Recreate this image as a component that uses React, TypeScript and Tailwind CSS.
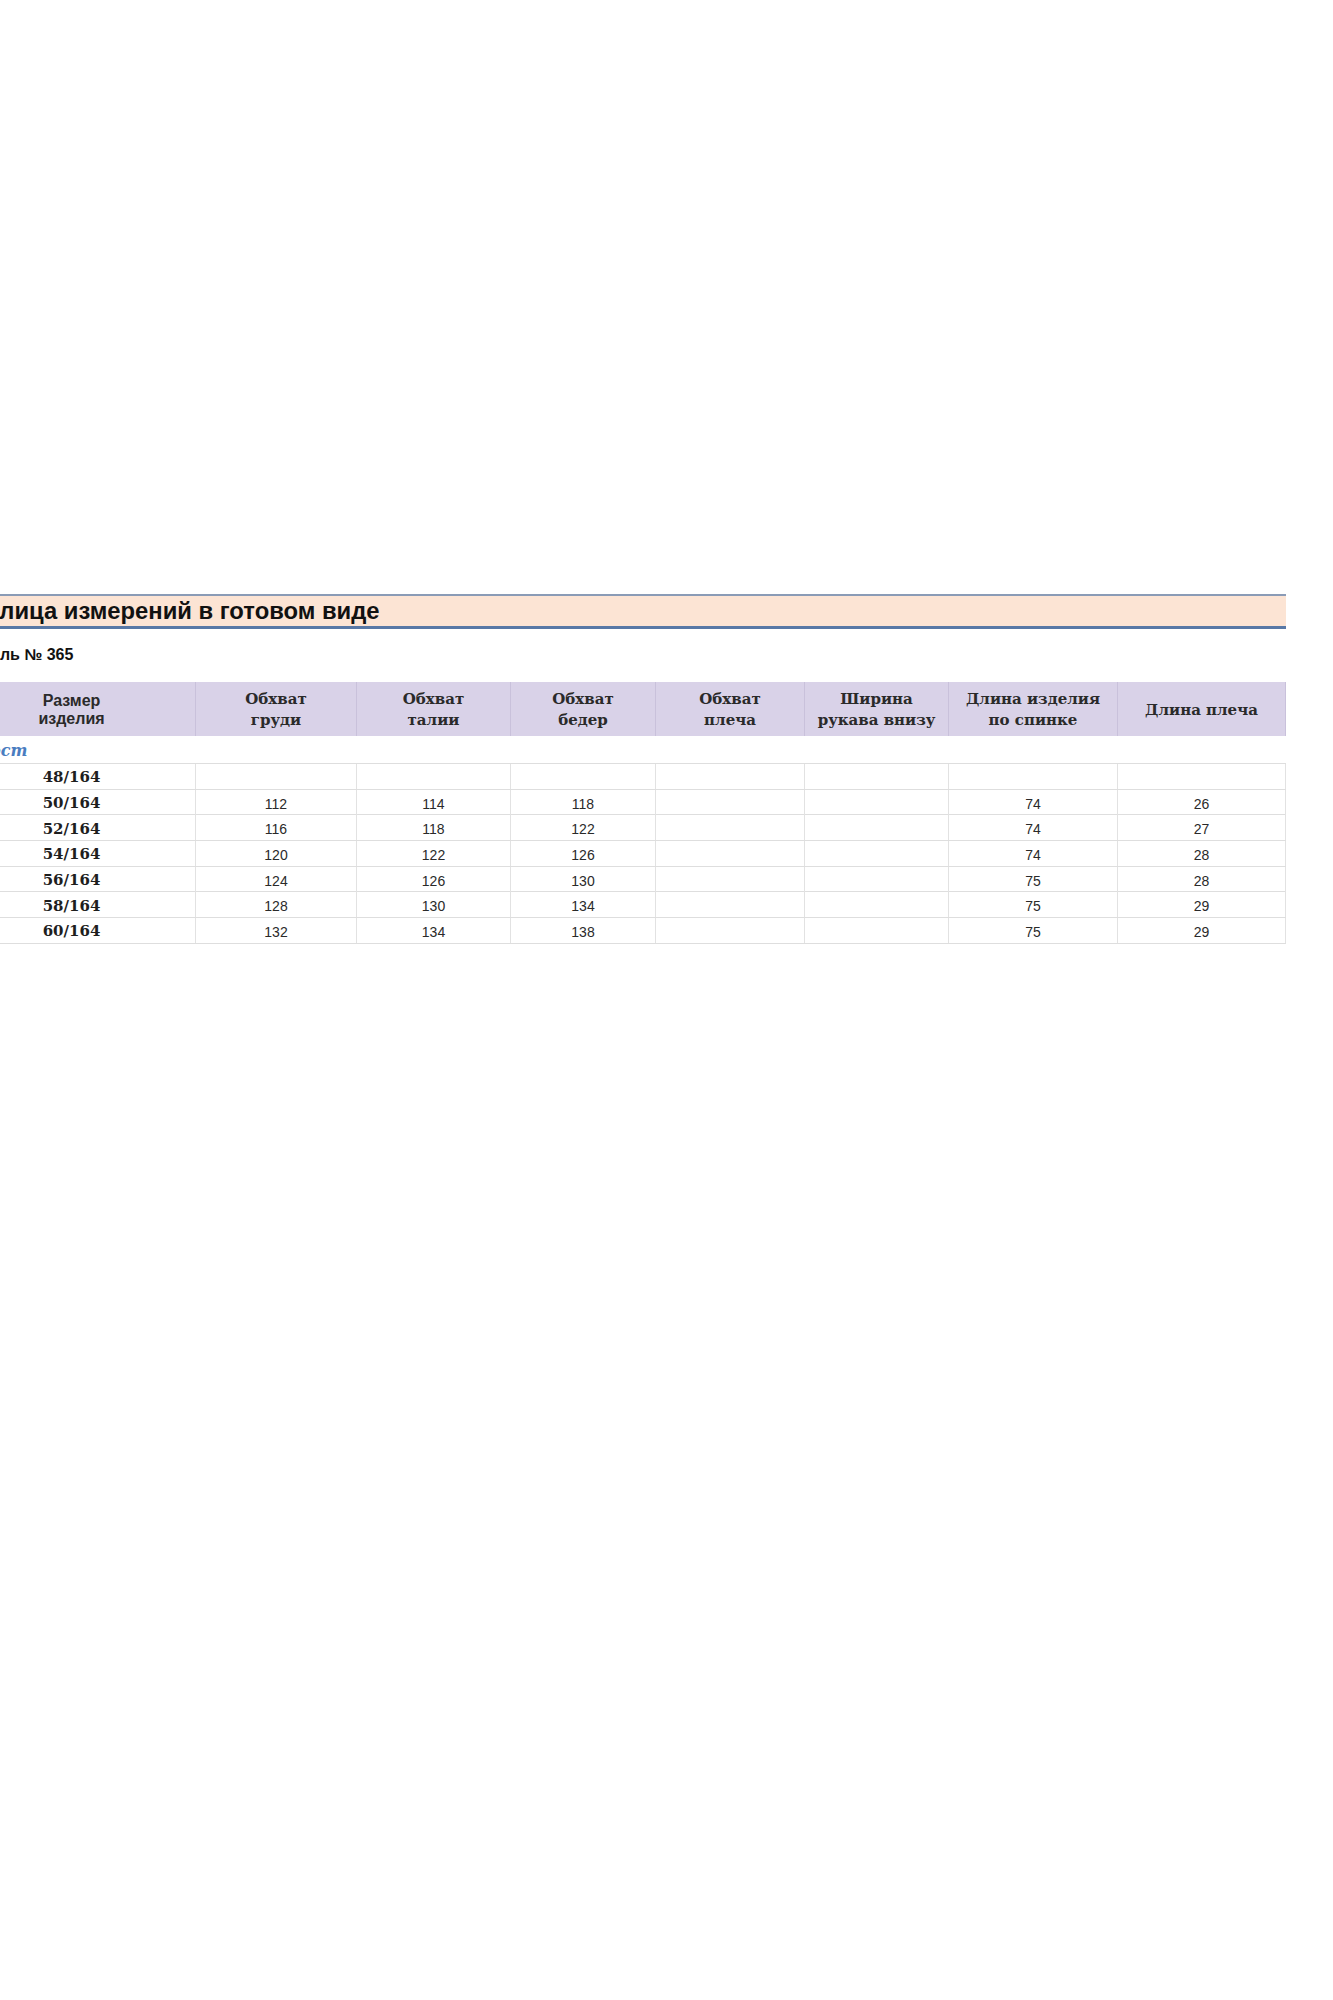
const columns = [
  { top: 'Размер', bottom: 'изделия', sans: true },
  { top: 'Обхват', bottom: 'груди' },
  { top: 'Обхват', bottom: 'талии' },
  { top: 'Обхват', bottom: 'бедер' },
  { top: 'Обхват', bottom: 'плеча' },
  { top: 'Ширина', bottom: 'рукава внизу' },
  { top: 'Длина изделия', bottom: 'по спинке' },
  { top: 'Длина плеча' },
];

const rows = [
  ['48/164', '', '', '', '', '', '', ''],
  ['50/164', '112', '114', '118', '', '', '74', '26'],
  ['52/164', '116', '118', '122', '', '', '74', '27'],
  ['54/164', '120', '122', '126', '', '', '74', '28'],
  ['56/164', '124', '126', '130', '', '', '75', '28'],
  ['58/164', '128', '130', '134', '', '', '75', '29'],
  ['60/164', '132', '134', '138', '', '', '75', '29'],
];

const grid = 'grid grid-cols-[248px_161px_154px_145px_149px_144px_169px_168px]';

export default function App() {
  return (
    <div className="min-h-[2000px] w-[1333px] overflow-hidden bg-white">
      <div className="-ml-[52px] w-[1338px] pt-[594px]">
        {/* title band */}
        <div className="flex h-[35px] items-center border-t-2 border-b-[3px] border-t-[#8a9bb6] border-b-[#5878a6] bg-[#fce4d4] pl-[10px]">
          <span className="font-['Liberation_Sans',Arial,sans-serif] text-[23.8px] font-bold leading-none text-[#111]">
            Таблица измерений в готовом виде
          </span>
        </div>

        <div className="mt-[16px] h-5 pl-[10px] font-['Liberation_Sans',Arial,sans-serif] text-[16px] font-bold leading-5 text-[#111]">
          Модель № 365
        </div>

        {/* table */}
        <div className="mt-[17px]">
          <div className={`${grid} h-[54px] bg-[#d9d2e8]`}>
            {columns.map((c, i) => (
              <div
                key={i}
                className={`flex flex-col items-center justify-center border-r border-[#c9c1db] pt-[2px] text-center font-bold text-[#2a2a2a] ${
                  c.sans
                    ? "font-['Liberation_Sans',Arial,sans-serif] text-[16px] leading-[18px]"
                    : "font-['DejaVu_Serif',serif] text-[15px] leading-[21px]"
                }`}
              >
                <span>{c.top}</span>
                {c.bottom && <span>{c.bottom}</span>}
              </div>
            ))}
          </div>

          <div className="flex h-[28px] items-center border-b border-[#dedede] pl-[30px] pt-[2px] font-['DejaVu_Serif',serif] text-[16px] font-bold italic text-[#4a7dc0]">
            Рост
          </div>

          {rows.map((r, ri) => (
            <div key={ri} className={`${grid} h-[25.7px] border-b border-[#dedede]`}>
              {r.map((v, ci) => (
                <div
                  key={ci}
                  className={`flex items-center justify-center border-r border-[#e2e2e2] ${
                    ci === 0
                      ? "pt-[2px] font-['DejaVu_Serif',serif] text-[15px] font-bold text-[#1e1e1e]"
                      : "pt-[4px] font-['Liberation_Sans',Arial,sans-serif] text-[14px] text-[#2a2a2a]"
                  }`}
                >
                  {v}
                </div>
              ))}
            </div>
          ))}
        </div>
      </div>
    </div>
  );
}
